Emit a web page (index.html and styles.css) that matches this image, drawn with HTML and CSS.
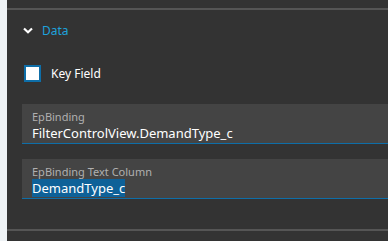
FILE: index.html
```html
<!DOCTYPE html>
<html>
<head>
<meta charset="utf-8">
<link rel="stylesheet" href="styles.css">
</head>
<body>
<div class="page">
  <div class="strip"></div>
  <div class="panel">
    <div class="divider top"></div>
    <div class="section-head">
      <svg class="chev" width="10" height="7" viewBox="0 0 10 7"><path d="M1 1.5 L5 5.2 L9 1.5" fill="none" stroke="#ffffff" stroke-width="2.2"/></svg>
      <span class="section-title">Data</span>
    </div>
    <label class="check-row">
      <span class="checkbox"></span>
      <span class="check-label">Key Field</span>
    </label>
    <div class="field">
      <div class="field-label">EpBinding</div>
      <div class="field-value">FilterControlView.DemandType_c</div>
    </div>
    <div class="field second">
      <div class="field-label">EpBinding Text Column</div>
      <div class="field-value"><span class="sel">DemandType_c</span></div>
    </div>
    <div class="spacer"></div>
    <div class="divider bottom"></div>
  </div>
</div>
</body>
</html>
```
FILE: styles.css
```css
html, body {
  margin: 0;
  padding: 0;
  width: 388px;
  height: 241px;
  overflow: hidden;
  background: #333333;
}
.page {
  display: flex;
  height: 241px;
  font-family: "Noto Sans", sans-serif;
}
.strip {
  width: 7px;
  background: #eef2f5;
  flex: none;
}
.panel {
  flex: 1;
  background: #333333;
  display: flex;
  flex-direction: column;
  padding-top: 8px;
}
.divider {
  height: 2px;
  background: #555555;
}
.section-head {
  display: flex;
  align-items: center;
  height: 20px;
  margin-top: 10px;
  padding-left: 16px;
}
.chev { display: block; margin-right: 9px; }
.section-title {
  color: #1ea2dc;
  font-size: 12px;
}
.check-row {
  display: flex;
  align-items: center;
  margin-top: 25px;
  padding-left: 17px;
  height: 17px;
}
.checkbox {
  width: 13px;
  height: 13px;
  border: 2px solid #0e6ea8;
  background: #ffffff;
  margin-right: 10px;
}
.check-label {
  color: #ffffff;
  font-size: 12px;
}
.field {
  margin-left: 15px;
  margin-top: 22px;
  height: 39px;
  background: #444444;
  border-bottom: 1px solid #0e6ea8;
  padding-left: 10px;
  box-sizing: content-box;
}
.field.second { margin-top: 15px; }
.field-label {
  color: #b0b0b0;
  font-size: 11px;
  line-height: 13px;
  padding-top: 6px;
}
.field-value {
  color: #ffffff;
  font-size: 13px;
  line-height: 18px;
  margin-top: 1px;
}
.sel {
  background: #0e6198;
}
.spacer { flex: 1; }
.bottom { margin-bottom: 10px; }
```
